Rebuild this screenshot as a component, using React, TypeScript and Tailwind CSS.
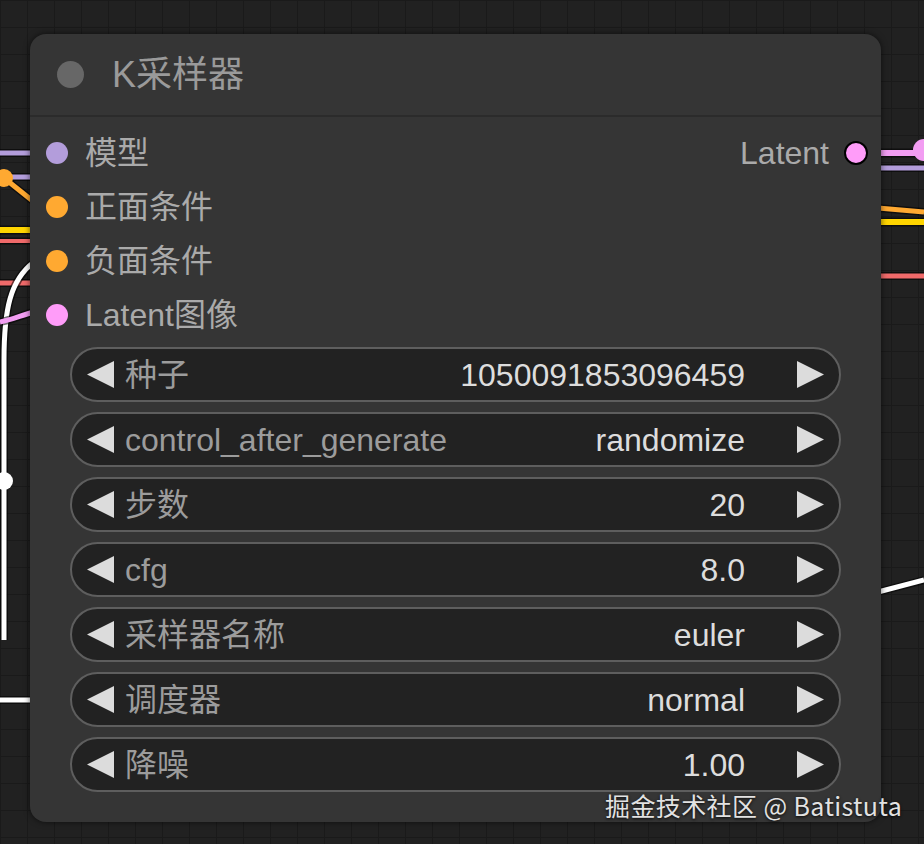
import React from "react";

const inputs = [
  { label: "模型", color: "bg-[#b39ddb]" },
  { label: "正面条件", color: "bg-[#ffa931]" },
  { label: "负面条件", color: "bg-[#ffa931]" },
  { label: "Latent图像", color: "bg-[#ff9cf9]" },
];

const widgets = [
  { label: "种子", value: "1050091853096459" },
  { label: "control_after_generate", value: "randomize" },
  { label: "步数", value: "20" },
  { label: "cfg", value: "8.0" },
  { label: "采样器名称", value: "euler" },
  { label: "调度器", value: "normal" },
  { label: "降噪", value: "1.00" },
];

function Wire({ d, color, w = 5 }: { d: string; color: string; w?: number }) {
  return (
    <g>
      <path d={d} stroke="#000" strokeOpacity={0.55} strokeWidth={w + 3} fill="none" />
      <path d={d} stroke={color} strokeWidth={w} fill="none" />
    </g>
  );
}

function Wires() {
  return (
    <svg className="absolute inset-0" width={924} height={844} viewBox="0 0 924 844">
      {/* left */}
      <Wire d="M0,153 L34,153" color="#b39ddb" />
      <Wire d="M0,177 L34,177" color="#b39ddb" />
      <Wire d="M4,178 L34,202" color="#ffa931" />
      <circle cx={4} cy={178} r={9} fill="#ffa931" />
      <Wire d="M0,230 L34,230" color="#ffd500" w={6} />
      <Wire d="M0,241 L34,241" color="#f06a6a" w={4} />
      <Wire d="M0,283 L34,283" color="#f06a6a" w={5} />
      <Wire d="M34,262 C10,280 4,310 4,360 L4,640" color="#ffffff" w={5} />
      <Wire d="M0,322 C12,320 22,315 34,312" color="#f29df2" w={5} />
      <circle cx={4} cy={481} r={9} fill="#ffffff" />
      <Wire d="M0,700 L34,700" color="#ffffff" w={5} />
      {/* right */}
      <Wire d="M878,153 L924,153" color="#f29df2" w={6} />
      <circle cx={924} cy={150} r={11} fill="#f29df2" />
      <Wire d="M878,168 L924,168" color="#b39ddb" />
      <Wire d="M878,208 L924,212" color="#ffa931" />
      <Wire d="M878,222 L924,222" color="#ffd500" w={6} />
      <Wire d="M878,276 L924,276" color="#f06a6a" w={5} />
      <Wire d="M878,592 L924,580" color="#ffffff" w={5} />
    </svg>
  );
}

function LeftArrow() {
  return (
    <svg width={27} height={27} viewBox="0 0 27 27" className="shrink-0">
      <polygon points="27,0 27,27 0,13.5" fill="#dcdcdc" />
    </svg>
  );
}

function RightArrow() {
  return (
    <svg width={27} height={27} viewBox="0 0 27 27" className="shrink-0">
      <polygon points="0,0 27,13.5 0,27" fill="#dcdcdc" />
    </svg>
  );
}

export default function App() {
  return (
    <div className="relative w-[924px] h-[844px] overflow-hidden bg-[#212121] bg-[linear-gradient(to_right,#1a1a1a_1px,transparent_1px),linear-gradient(to_bottom,#1a1a1a_1px,transparent_1px)] bg-[size:27px_27px] pt-[34px] pl-[30px] font-['Liberation_Sans','Noto_Sans_CJK_SC',sans-serif]">
      <Wires />
      <div className="relative w-[851px] h-[788px] rounded-[16px] bg-[#353535] shadow-[0_0_6px_rgba(0,0,0,0.6)] flex flex-col">
        {/* title */}
        <div className="h-[83px] flex items-center pl-[27px] border-b-2 border-[#2b2b2b]">
          <div className="w-[27px] h-[27px] rounded-full bg-[#676767]" />
          <div className="ml-[28px] text-[36px] leading-none text-[#9a9a9a]">K采样器</div>
        </div>
        {/* slots */}
        <div className="flex pt-[9px]">
          <div className="flex-1 flex flex-col">
            {inputs.map((s) => (
              <div key={s.label} className="h-[54px] flex items-center pl-[16px]">
                <div className={`w-[22px] h-[22px] rounded-full ${s.color}`} />
                <div className="ml-[17px] text-[32px] leading-none text-[#aaaaaa]">{s.label}</div>
              </div>
            ))}
          </div>
          <div className="flex flex-col pr-[13px]">
            <div className="h-[54px] flex items-center">
              <div className="text-[32px] leading-none text-[#aaaaaa]">Latent</div>
              <div className="ml-[15px] w-[24px] h-[24px] rounded-full bg-[#ff9cf9] border-2 border-black" />
            </div>
          </div>
        </div>
        {/* widgets */}
        <div className="mt-[5px] flex flex-col gap-[10px] px-[40px]">
          {widgets.map((w) => (
            <div
              key={w.label}
              className="h-[55px] rounded-full border-2 border-[#5e5e5e] bg-[#222222] flex items-center px-[15px]"
            >
              <LeftArrow />
              <div className="ml-[11px] text-[32px] leading-none text-[#9c9c9c] whitespace-nowrap">{w.label}</div>
              <div className="flex-1" />
              <div className="text-[32px] leading-none text-[#dddddd] whitespace-nowrap">{w.value}</div>
              <div className="ml-[52px]">
                <RightArrow />
              </div>
            </div>
          ))}
        </div>
      </div>
      <div className="absolute left-[605px] top-[793px] text-[25px] leading-none tracking-[0.4px] text-[#e2e2e2] whitespace-nowrap font-['Noto_Sans_CJK_SC',sans-serif] [text-shadow:0_1px_3px_rgba(0,0,0,0.9)]">
        掘金技术社区 @ Batistuta
      </div>
    </div>
  );
}
